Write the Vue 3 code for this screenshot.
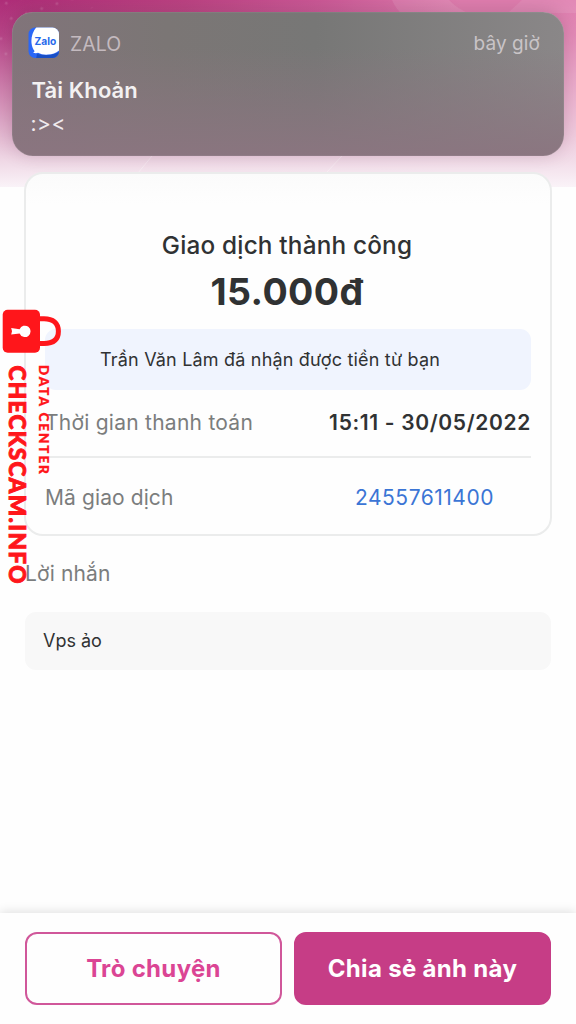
<script setup>
const rows = [
  { label: 'Thời gian thanh toán', value: '15:11 - 30/05/2022', kind: 'time' },
  { label: 'Mã giao dịch', value: '24557611400', kind: 'code' },
]
</script>

<template>
  <main class="screen">
    <header class="hero">
      <svg class="pattern" width="576" height="187" viewBox="0 0 576 187">
        <defs>
          <pattern id="dots" width="16" height="16" patternUnits="userSpaceOnUse" patternTransform="rotate(-18)">
            <circle cx="5" cy="5" r="1.5" fill="#fff" opacity=".13" />
          </pattern>
        </defs>
        <path d="M0 0H108L80 14H14V66H0Z" fill="url(#dots)" />
        <path d="M392 0Q396 9 402 14H470Q456 8 449 0Z" fill="#fff" opacity=".1" />
        <path d="M522 0L508 13H576V0Z" fill="#fff" opacity=".09" />
        <path d="M152 156L138 173M342 156L326 173" stroke="#fff" opacity=".35" />
      </svg>
      <section class="notice">
        <div class="notice-head">
          <svg class="zalo" width="32" height="32" viewBox="0 0 32 32">
            <defs><clipPath id="appshape"><rect x=".5" y=".5" width="30.5" height="30.5" rx="6.5" /></clipPath></defs>
            <g clip-path="url(#appshape)">
              <rect width="32" height="32" fill="#2b67f6" />
              <path d="M8 32L9 27Q23 30 32 24V32Z" fill="#194fc5" />
              <path d="M8.5 0C4.5 5 3 10 3.5 16C4 20 5 22 6.5 24Q6.5 25 5 25.7Q8 26.5 10 25.8Q14 28 20 27.6Q27 27.5 32 22.5V0Z" fill="#fff" />
            </g>
            <text x="6.6" y="18.2" textLength="21.7" lengthAdjust="spacingAndGlyphs">Zalo</text>
          </svg>
          <span class="app-name">ZALO</span>
          <span class="when">bây giờ</span>
        </div>
        <div class="notice-title">Tài Khoản</div>
        <div class="notice-body">:&gt;&lt;</div>
      </section>
    </header>

    <section class="card">
      <h1>Giao dịch thành công</h1>
      <div class="amount">15.000đ</div>
      <div class="received"><span>Trần Văn Lâm đã nhận được tiền từ bạn</span></div>
      <div v-for="row in rows" :key="row.kind" class="row" :class="row.kind">
        <span class="label">{{ row.label }}</span>
        <span class="value">{{ row.value }}</span>
      </div>
    </section>

    <section class="message">
      <h2>Lời nhắn</h2>
      <div class="message-box"><span>Vps ảo</span></div>
    </section>

    <footer class="actions">
      <button class="chat"><span>Trò chuyện</span></button>
      <button class="share"><span>Chia sẻ ảnh này</span></button>
    </footer>

    <svg class="stamp" width="64" height="280" viewBox="0 0 64 280">
      <path d="M39 9.8H44C53 9.8 58.4 14 58.4 22.3S53 34.5 44 34.5H39" fill="none" stroke="#ff161b" stroke-width="5" />
      <rect x="2.7" y=".8" width="37.3" height="43" rx="5" fill="#ff161b" />
      <path d="M11.2 19L19.6 20.2A5.7 5.7 0 1 1 19.6 24.5L11.2 25.6L12 22.3Z" fill="#fff" />
      <text class="stamp-main" transform="translate(8.7 56.5) rotate(90)" textLength="218">CHECKSCAM.INFO</text>
      <text class="stamp-sub" transform="translate(38.5 56) rotate(90)" textLength="109">DATA CENTER</text>
    </svg>
  </main>
</template>

<style>
body { margin: 0; background: #fefefe; }
</style>

<style scoped>
.screen {
  position: relative;
  box-sizing: border-box;
  display: flex;
  flex-direction: column;
  width: 576px;
  height: 1024px;
  overflow: hidden;
  background: #fefefe;
  font-family: Inter, "Noto Sans", sans-serif;
  color: #303233;
}
.hero {
  position: relative;
  box-sizing: border-box;
  height: 187px;
  flex: none;
  padding: 12px 12px 0;
  background:
    linear-gradient(180deg, rgba(254,248,251,0) 0, rgba(251,239,246,.12) 35px, rgba(248,233,241,.58) 110px, rgba(243,226,236,.94) 160px, #faf3f8 187px),
    linear-gradient(90deg, #ae2d78 0, #bc4282 32%, #cb5896 55%, #e07eaf 80%, #e07eaf 100%);
}
.pattern { position: absolute; left: 0; top: 0; }
.notice {
  position: relative;
  box-sizing: border-box;
  height: 144px;
  border-radius: 21px;
  padding: 15px 24px 0 16px;
  background: linear-gradient(180deg, rgba(137,116,128,0) 25%, rgba(139,117,128,.95) 100%), linear-gradient(90deg, #81747a 0, #7b7675 28%, #777776 55%, #8a8788 100%);
  box-shadow: 0 -2px 18px rgba(75,25,52,.22), inset 0 0 1px rgba(255,255,255,.55);
}
.notice-head { display: flex; align-items: center; height: 32px; }
.zalo text { font: 700 10.5px Inter, sans-serif; fill: #2869eb; }
.app-name { margin: 1px 0 0 10px; font-size: 19.5px; color: #c4babf; }
.when { margin: 1px 0 0 auto; font-size: 19px; letter-spacing: .1px; color: #c9c4c7; }
.notice-title { margin: 17px 0 0 3.5px; font-size: 22px; line-height: 28px; font-weight: 600; letter-spacing: .1px; color: #f3f1f2; }
.notice-body { margin: 7px 0 0 2.5px; font-size: 21px; line-height: 26px; letter-spacing: .5px; color: #f0eaed; }
.card {
  position: relative;
  box-sizing: border-box;
  height: 364px;
  margin: -15px 24px 0;
  padding: 54px 19px 0;
  border: 2px solid #ebecec;
  border-radius: 19px;
  background: linear-gradient(#fbfbfb, #fefefe 30px);
  flex: none;
}
h1 { margin: 0 2px 0 0; text-align: center; font-size: 24.3px; line-height: 34px; font-weight: 500; letter-spacing: .2px; }
.amount { height: 46px; margin: 0 2px 21px 0; text-align: center; font-size: 37.5px; line-height: 59px; font-weight: 700; letter-spacing: .4px; }
.received { display: flex; align-items: center; height: 61px; padding-left: 55px; border-radius: 11px; background: #f0f4fe; font-size: 18px; letter-spacing: .19px; }
.row { display: flex; align-items: center; justify-content: space-between; font-size: 21px; }
.label { color: #7b7d7d; letter-spacing: .25px; }
.time { height: 68px; border-bottom: 2px solid #ebecec; box-sizing: border-box; }
.time .label, .time .value { position: relative; top: -1px; }
.time .value { font-weight: 600; letter-spacing: .65px; }
.code { height: 78px; padding-right: 37px; }
.code .label { letter-spacing: .1px; }
.code .value { color: #3b75d5; letter-spacing: .52px; }
.message { margin: 20px 25px 0; }
h2 { margin: 0; font-size: 21px; line-height: 36px; font-weight: 400; letter-spacing: .13px; color: #7b7d7d; }
.message-box { display: flex; align-items: center; height: 58px; margin-top: 20px; padding-left: 18px; border-radius: 11px; background: #f8f8f8; font-size: 18px; }
.message-box span { margin-top: -1px; }
.actions {
  display: flex;
  gap: 12px;
  box-sizing: border-box;
  height: 111px;
  margin-top: auto;
  padding: 19px 25px;
  background: #fefefe;
  box-shadow: 0 -1px 10px rgba(0,0,0,.13);
}
button { box-sizing: border-box; flex: 1; border: 2px solid #d0579a; border-radius: 12px; padding: 0; font: 700 24px Inter, sans-serif; letter-spacing: .32px; background: #fefefe; color: #db4594; }
.share { border-color: #c63d86; background: #c63d86; color: #fff; }
.stamp { position: absolute; left: 0; top: 309px; }
.stamp text { fill: #ff161b; font-family: Lato, sans-serif; }
.stamp-main { font-size: 22.5px; font-weight: 900; stroke: #ff161b; stroke-width: .9px; }
.stamp-sub { font-size: 13.5px; font-weight: 800; stroke: #ff161b; stroke-width: .2px; }
</style>
